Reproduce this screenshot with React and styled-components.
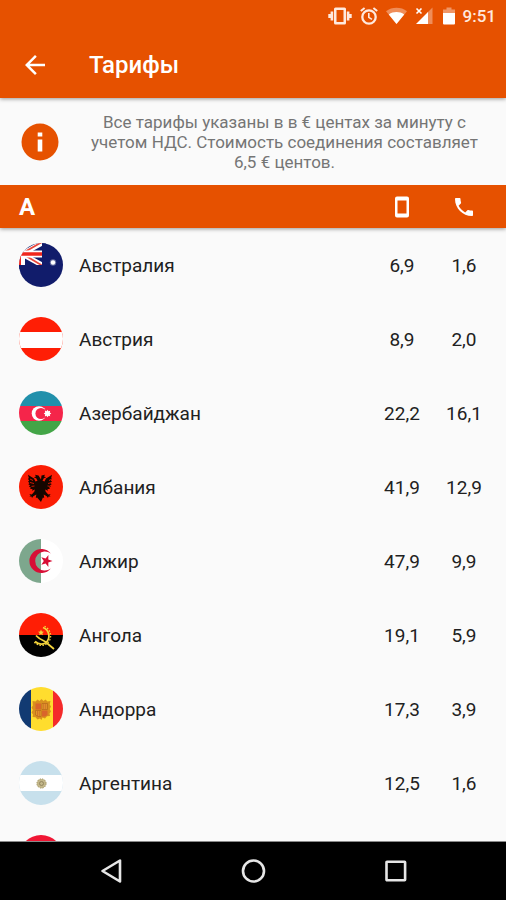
import styled, { createGlobalStyle } from "styled-components";

const App = () => {
  return (
    <Screen>
      <GlobalStyle />
      <Header>
        <StatusBar>
          <VibrateIcon />
          <AlarmIcon />
          <WifiIcon />
          <SignalIcon />
          <BatteryIcon />
          <Clock>9:51</Clock>
        </StatusBar>
        <Toolbar>
          <BackButton type="button" aria-label="Назад">
            <svg width="30" height="30" viewBox="0 0 24 24" fill="#fff">
              <path d="M20 11H7.83l5.59-5.59L12 4l-8 8 8 8 1.41-1.41L7.83 13H20v-2z" />
            </svg>
          </BackButton>
          <Title>Тарифы</Title>
        </Toolbar>
      </Header>
      <Info>
        <InfoIcon />
        <InfoText>
          Все тарифы указаны в в € центах за минуту с учетом НДС. Стоимость
          соединения составляет 6,5 € центов.
        </InfoText>
      </Info>
      <List>
        <Table>
          <thead>
            <GroupRow>
              <GroupLetter scope="col">А</GroupLetter>
              <RateHead scope="col" aria-label="Мобильный">
                <MobileIcon />
              </RateHead>
              <RateHead scope="col" aria-label="Городской">
                <CallIcon />
              </RateHead>
            </GroupRow>
          </thead>
          <tbody>
            {countries.map(({ id, name, Shape, mobile, landline }) => (
              <tr key={id}>
                <NameCell scope="row">
                  <Country>
                    <Flag viewBox="0 0 44 44" aria-hidden="true">
                      <Shape />
                    </Flag>
                    {name}
                  </Country>
                </NameCell>
                <RateCell>{mobile}</RateCell>
                <RateCell>{landline}</RateCell>
              </tr>
            ))}
          </tbody>
        </Table>
      </List>
      <NavBar>
        <NavButton type="button" aria-label="Назад">
          <svg width="24" height="26" viewBox="0 0 24 26">
            <path d="M21 2.5v21L3.5 13z" />
          </svg>
        </NavButton>
        <NavButton type="button" aria-label="Домой">
          <svg width="26" height="26" viewBox="0 0 26 26">
            <circle cx="13.5" cy="13" r="10.5" />
          </svg>
        </NavButton>
        <NavButton type="button" aria-label="Обзор">
          <svg width="24" height="24" viewBox="0 0 24 24">
            <rect x="3.5" y="2.7" width="18.6" height="18.6" rx="0.5" />
          </svg>
        </NavButton>
      </NavBar>
    </Screen>
  );
};

export default App;

/* status bar icons */

const VibrateIcon = () => (
  <svg width="24" height="18" viewBox="0 0 24 18" fill="#ffe9de">
    <path
      fillRule="evenodd"
      d="M7.5 0.5h9a1.5 1.5 0 0 1 1.5 1.5v14a1.5 1.5 0 0 1-1.5 1.5h-9A1.5 1.5 0 0 1 6 16V2a1.500 1.500 0 0 1 1.500-1.500zM8.500 3v12h7V3z"
    />
    <path d="M2.600 4.500h2.600v9H2.600zM0.300 7h2.700v4H0.300zM18.800 4.500h2.600v9h-2.600zM21 7h2.700v4H21z" />
  </svg>
);

const AlarmIcon = () => (
  <svg width="18" height="18" viewBox="0 0 18 18" fill="none" stroke="#ffe9de">
    <circle cx="9" cy="10" r="6.700" strokeWidth="2.300" />
    <path d="M8.800 6v4.400l3.200 2" strokeWidth="1.600" />
    <path d="M0.800 4L4.600 0.900M17.200 4l-3.800-3.100" strokeWidth="2" />
  </svg>
);

const WifiIcon = () => (
  <svg width="21" height="18" viewBox="0 0 21 18" fill="#fff">
    <path d="M10.5 17L0 4.2C3 1.9 6.7 0.8 10.5 0.8S18 1.9 21 4.2z" opacity="0.35" />
    <path d="M10.5 17L2.8 7.4C5 5.8 7.7 5 10.5 5S16 5.8 18.2 7.4z" />
  </svg>
);

const SignalIcon = () => (
  <svg width="20" height="18" viewBox="0 0 20 18" fill="#fff">
    <path d="M17.5 0.5V17h-5V5.5z" opacity="0.35" />
    <path d="M13 5v12H1z" />
    <path d="M1.5 1.5l5 5M6.5 1.5l-5 5" stroke="#fff" strokeWidth="1.6" />
  </svg>
);

const BatteryIcon = () => (
  <svg width="12" height="18" viewBox="0 0 12 18" fill="#fff">
    <path d="M0 6V2.500h3.500v-2h5v2H12V6z" opacity="0.4" />
    <path d="M0 6h12v10.5a1 1 0 0 1-1 1H1a1 1 0 0 1-1-1z" />
  </svg>
);

/* content icons */

const InfoIcon = () => (
  <svg width="38" height="38" viewBox="0 0 38 38" aria-hidden="true">
    <circle cx="19" cy="19" r="18.5" fill="#e65100" />
    <path d="M16.7 9.5h4.6v4h-4.6zM16.7 16.5h4.6v12h-4.6z" fill="#fff" />
  </svg>
);

const MobileIcon = () => (
  <svg width="14" height="22" viewBox="0 0 14 22" fill="#fff">
    <path
      fillRule="evenodd"
      d="M2 0.5h10a2 2 0 0 1 2 2v17a2 2 0 0 1-2 2H2a2 2 0 0 1-2-2v-17a2 2 0 0 1 2-2zM2.5 4.5v13h9v-13z"
    />
  </svg>
);

const CallIcon = () => (
  <svg width="24" height="24" viewBox="0 0 24 24" fill="#fff">
    <path d="M6.62 10.79c1.44 2.83 3.76 5.14 6.59 6.59l2.2-2.2c.27-.27.67-.36 1.02-.24 1.12.37 2.33.57 3.57.57.55 0 1 .45 1 1V20c0 .55-.45 1-1 1-9.39 0-17-7.61-17-17 0-.55.45-1 1-1h3.5c.55 0 1 .45 1 1 0 1.25.2 2.45.57 3.57.11.35.03.74-.25 1.02l-2.2 2.2z" />
  </svg>
);

/* flags, all on a 44x44 field that is rounded by <Flag> */

const Australia = () => (
  <>
    <rect width="44" height="44" fill="#111c6b" />
    <path d="M23 0L3 11l20 11" fill="none" stroke="#fff" strokeWidth="5" />
    <path d="M23 -1L3 10.5l20 12" fill="none" stroke="#e8473d" strokeWidth="1.8" />
    <path d="M0 7.5h23v7H0zM0 0h6v22H0z" fill="#fff" />
    <path d="M0 9.2h23v3.6H0zM0 0h2v22H0z" fill="#f0261c" />
    <path d="M0 22h24v4H0zM23 0h4v24h-4z" fill="#111c6b" />
    <circle cx="34" cy="19.5" r="2.2" fill="#fff" />
    <circle cx="34" cy="19.5" r="3.2" fill="#fff" opacity="0.35" />
  </>
);

const Austria = () => (
  <>
    <rect width="44" height="44" fill="#ff1e05" />
    <rect x="-1" y="15" width="46" height="16" fill="#fff" />
  </>
);

const Azerbaijan = () => (
  <>
    <rect width="44" height="15" fill="#2190ab" />
    <rect y="15" width="44" height="15" fill="#f5254a" />
    <rect y="30" width="44" height="14" fill="#43a547" />
    <circle cx="20" cy="22.5" r="7.3" fill="#fff" />
    <circle cx="22" cy="22.5" r="5.6" fill="#f5254a" />
    <path
      d="M28.5 18.7l1 1.5 1.7-.4-.4 1.7 1.5 1-1.5 1 .4 1.7-1.7-.4-1 1.5-1-1.5-1.7.4.4-1.7-1.5-1 1.5-1-.4-1.7 1.7.4z"
      fill="#fff"
    />
  </>
);

const Albania = () => (
  <>
    <rect width="44" height="44" fill="#fb1d04" />
    <path
      d="M22 14.5l-2.500-4-3.500-.7 1 1.700-2.200.8 2.400 1 1.300 2.500-2 .8-1.500-3-2.500-1.500-3.500-2.300.8 3.200-.8 1 1.200 1.500-1.200 1.200 1.500 1.200-1.200 1.400 1.700 1-1 1.500 1.900.6-.8 1.700 2.400-.1-.5 1.800 2.800-1.200-.4 2-2.600 2.800-2.600-.4 1.400 1.300-1.100 1.300 2-.2.5 1.600 1.300-1.800 3-1.700-.5 3.500 1.300-.5L22 37l1.900-4.500 1.300.5-.5-3.500 3 1.700 1.300 1.800.5-1.600 2 .2-1.100-1.300 1.400-1.300-2.600.4-2.600-2.800-.4-2 2.800 1.200-.5-1.800 2.400.1-.8-1.700 1.900-.6-1-1.500 1.700-1-1.200-1.400 1.500-1.200-1.200-1.200 1.200-1.500-.8-1 .8-3.200-3.500 2.300-2.500 1.500-1.500 3-2-.8 1.300-2.500 2.400-1-2.200-.8 1-1.700-3.500.7z"
      fill="#150600"
    />
    <path
      d="M14 15.5l-3-1.5M15 18.5l-4-1M15.5 21l-3 .4M30 15.5l3-1.5M29 18.5l4-1M28.5 21l3 .4"
      stroke="#fb1d04"
      strokeWidth="0.8"
    />
  </>
);

const Algeria = () => (
  <>
    <rect width="22" height="44" fill="#7da78d" />
    <rect x="22" width="22" height="44" fill="#fff" />
    <path
      d="M31.8 14.5A12 12 0 1 0 31.8 29.5A9.6 9.6 0 1 1 31.8 14.5z"
      fill="#d80f36"
    />
    <path
      d="M33.5 22l-4.2 1.5.1 4.5-2.8-3.5-4.3 1.2 2.5-3.7-2.5-3.7 4.3 1.2 2.8-3.5-.1 4.5z"
      fill="#d80f36"
    />
  </>
);

const Angola = () => (
  <>
    <rect width="44" height="22" fill="#ff1e05" />
    <rect y="22" width="44" height="22" fill="#000" />
    <g fill="none" stroke="#f3d33c">
      <path d="M24 14.5A9 9 0 0 1 26.5 30Q21 33 16 28.5" strokeWidth="1.8" />
      <path
        d="M25.5 13.4A10.2 10.2 0 0 1 27.5 31Q21 34.500 15 29"
        strokeWidth="1.2"
        strokeDasharray="1.5 1.5"
      />
      <path d="M17 22.5Q20 26 26 28.5L35 36" strokeWidth="1.8" />
    </g>
    <path
      d="M22 16.500l.9 1.900 2.100.3-1.600 1.400.4 2.100-1.800-1-1.800 1 .4-2.100-1.600-1.400 2.100-.3z"
      fill="#f3d33c"
    />
  </>
);

const Andorra = () => (
  <>
    <rect width="12" height="44" fill="#123a72" />
    <rect x="12" width="22" height="44" fill="#ffdd2e" />
    <rect x="34" width="10" height="44" fill="#f42a2a" />
    <path
      d="M13.5 14l3 .5 2-2 2 1.5 2-2 2 2 2-1.5 2 2 3-.5-.8 3.5 1.3 2-1.3 2.5 1.3 2.5-1.5 2 .5 2.5-3 .3-2 2.2-2.5-1L22.500 33l-1.500-1.500-2.500 1-2-2.200-3-.3.5-2.500-1.500-2 1.300-2.500-1.300-2.500 1.300-2z"
      fill="#d9901f"
    />
    <path d="M16.5 16.5H22v6h-5.5zM23 23.5h5.5V28L26 29.5h-3z" fill="#d9652b" />
    <path
      d="M23 16.5h5.5v6H23zM16.5 23.5H22v6h-3L16.5 28z"
      fill="#e6a62c"
      stroke="#b9691c"
      strokeWidth="0.8"
    />
    <path d="M24.8 17v5M26.8 17v5M18.3 24v5M20.2 24v5" stroke="#c8572a" strokeWidth="0.8" />
  </>
);

const Argentina = () => (
  <>
    <rect width="44" height="44" fill="#c7e0ec" />
    <rect x="-1" y="14" width="46" height="16" fill="#fff" />
    <circle cx="22.5" cy="22.5" r="4.6" fill="#c3b78a" />
    <circle cx="22.5" cy="22.5" r="4.6" fill="none" stroke="#a39562" strokeDasharray="1.4 1" />
    <circle cx="22.5" cy="22.5" r="2" fill="none" stroke="#8a7d55" strokeWidth="0.8" />
  </>
);

const Armenia = () => (
  <>
    <rect width="44" height="15" fill="#f01634" />
    <rect y="15" width="44" height="15" fill="#1a3a9c" />
    <rect y="30" width="44" height="14" fill="#f2a800" />
  </>
);

const countries = [
  { id: "au", name: "Австралия", Shape: Australia, mobile: "6,9", landline: "1,6" },
  { id: "at", name: "Австрия", Shape: Austria, mobile: "8,9", landline: "2,0" },
  { id: "az", name: "Азербайджан", Shape: Azerbaijan, mobile: "22,2", landline: "16,1" },
  { id: "al", name: "Албания", Shape: Albania, mobile: "41,9", landline: "12,9" },
  { id: "dz", name: "Алжир", Shape: Algeria, mobile: "47,9", landline: "9,9" },
  { id: "ao", name: "Ангола", Shape: Angola, mobile: "19,1", landline: "5,9" },
  { id: "ad", name: "Андорра", Shape: Andorra, mobile: "17,3", landline: "3,9" },
  { id: "ar", name: "Аргентина", Shape: Argentina, mobile: "12,5", landline: "1,6" },
  { id: "am", Shape: Armenia },
];

const GlobalStyle = createGlobalStyle`
  * {
    box-sizing: border-box;
  }

  body {
    margin: 0;
    font-family: Roboto, "Noto Sans", sans-serif;
    background: #fafafa;
  }

  svg {
    display: block;
    flex-shrink: 0;
  }

  button {
    border: 0;
    padding: 0;
    background: none;
    cursor: pointer;
  }
`;

const Screen = styled.div`
  display: flex;
  flex-direction: column;
  height: 100vh;
`;

const Header = styled.header`
  z-index: 1;

  background: #e65100;
  box-shadow: 0 1px 4px rgba(0, 0, 0, 0.4);
`;

const StatusBar = styled.div`
  display: flex;
  justify-content: flex-end;
  align-items: center;
  gap: 8px;
  height: 32px;
  padding-right: 10px;
`;

const Clock = styled.span`
  font-weight: 500;
  font-size: 17px;

  color: #ffe9de;
`;

const Toolbar = styled.div`
  display: flex;
  align-items: center;
  gap: 39px;
  height: 66px;
  padding: 0 20px;
`;

const BackButton = styled.button`
  width: 30px;
  height: 30px;
`;

const Title = styled.h1`
  margin: 0;

  font-weight: 500;
  font-size: 24px;

  color: #fff;
`;

const Info = styled.section`
  display: flex;
  align-items: center;
  gap: 20px;
  padding: 14px 16px 13px 21px;
`;

const InfoText = styled.p`
  flex: 1;
  margin: 0;

  font-size: 17px;
  line-height: 20px;
  text-align: center;

  color: #757575;
`;

const List = styled.main`
  flex: 1;
  min-height: 0;
  overflow-y: auto;
  scrollbar-width: none;
`;

const Table = styled.table`
  width: 100%;
  table-layout: fixed;
  border-spacing: 0;
`;

const GroupRow = styled.tr`
  height: 43px;

  background: #e65100;
  box-shadow: 0 1px 4px rgba(0, 0, 0, 0.4);
`;

const GroupLetter = styled.th`
  padding: 0 0 0 19px;

  font-weight: 700;
  font-size: 24px;
  text-align: left;

  color: #fff;
`;

const RateHead = styled.th`
  width: 62px;
  padding: 0;

  svg {
    margin: 0 auto;
  }

  &:last-child {
    width: 73px;
    padding-right: 11px;
  }
`;

const NameCell = styled.th`
  height: 74px;
  padding: 0 0 0 19px;

  font-weight: 400;
  font-size: 19px;
  text-align: left;

  color: #212121;
`;

const Country = styled.div`
  display: flex;
  align-items: center;
  gap: 16px;
`;

const Flag = styled.svg`
  width: 44px;
  height: 44px;
  border-radius: 50%;
`;

const RateCell = styled.td`
  padding: 0;

  font-size: 19px;
  text-align: center;

  color: #212121;

  &:last-child {
    padding-right: 11px;
  }
`;

const NavBar = styled.nav`
  display: flex;
  justify-content: center;
  height: 59px;
  border-top: 1px solid #8a8a8a;

  background: #000;
`;

const NavButton = styled.button`
  display: flex;
  justify-content: center;
  align-items: center;
  width: 28%;

  svg {
    fill: none;
    stroke: #e6e6e6;
    stroke-width: 2.6;
    stroke-linejoin: round;
  }
`;
